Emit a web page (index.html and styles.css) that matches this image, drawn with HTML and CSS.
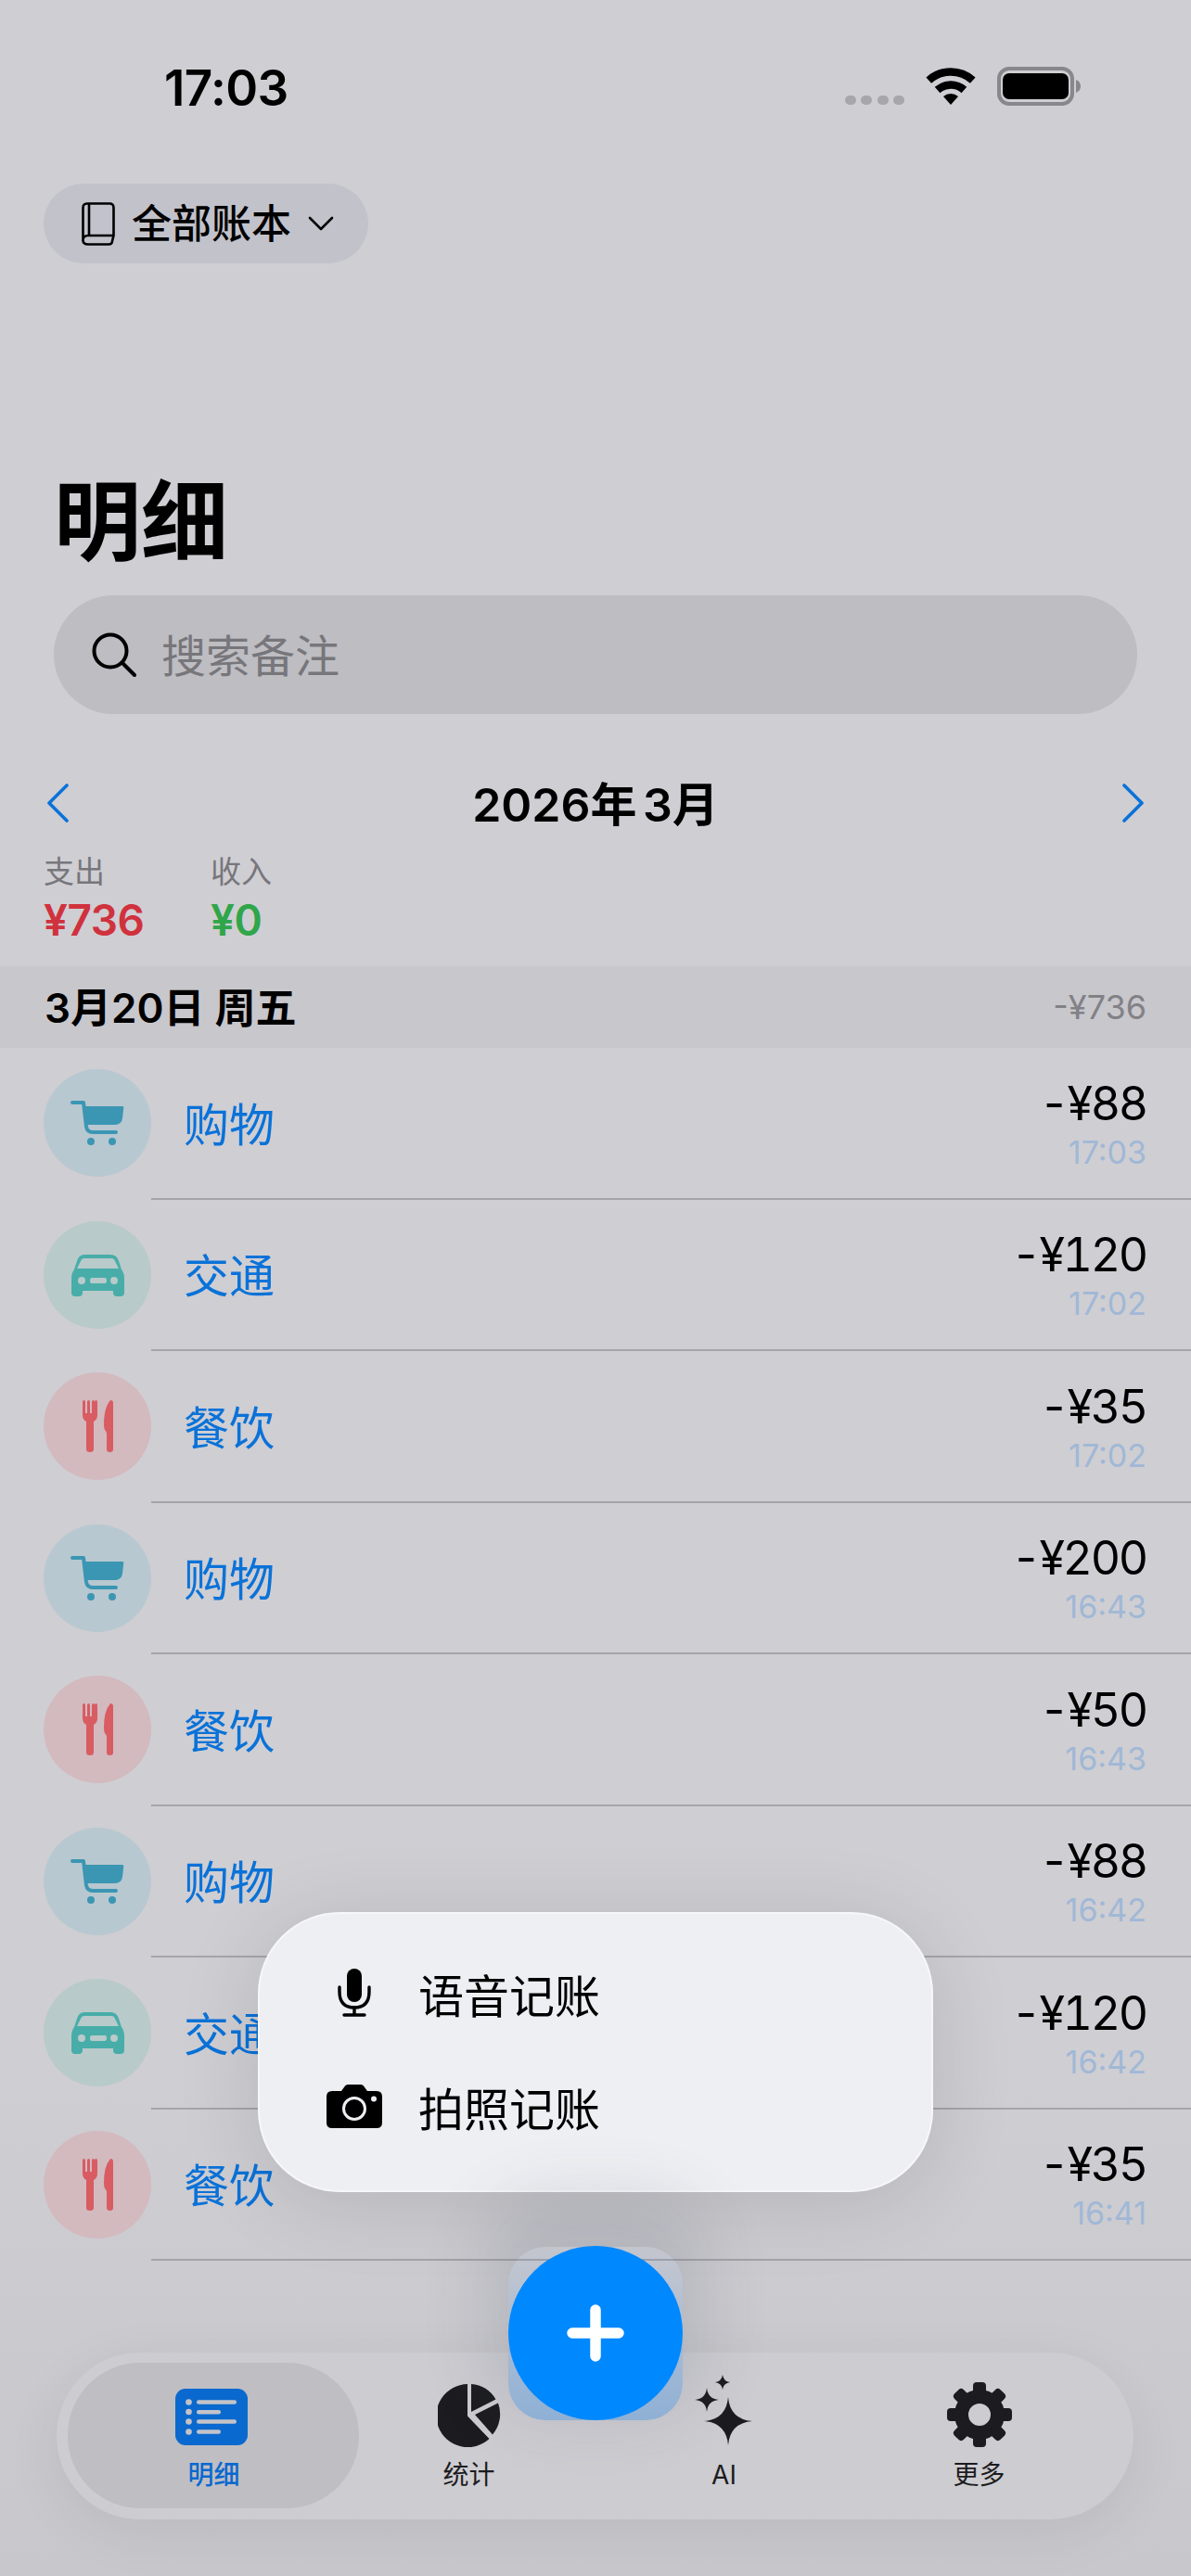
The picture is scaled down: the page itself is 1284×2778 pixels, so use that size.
FILE: index.html
```html
<!DOCTYPE html>
<html lang="zh-CN">
<head>
    <meta charset="UTF-8">
    <meta name="viewport" content="width=device-width, initial-scale=1.0">
    <title>明细</title>
    <link rel="stylesheet" href="styles.css">
</head>
<body>
    <svg class="icon-defs" width="0" height="0">
        <defs>
            <symbol id="cart" viewBox="0 0 116 116">
                <path d="M31 36H43L46 62Q47 68 53 68H78" fill="none" stroke="currentColor" stroke-width="4" stroke-linecap="round" stroke-linejoin="round"/>
                <path d="M43 40H85Q86.500 40 86.300 41.500L85 53Q84 60 77 60H46Z" fill="currentColor"/>
                <circle cx="51" cy="78" r="4" fill="currentColor"/>
                <circle cx="74" cy="78" r="4" fill="currentColor"/>
            </symbol>
            <symbol id="car" viewBox="0 0 116 116">
                <path fill-rule="evenodd" fill="currentColor" d="M44 36H72Q79 36 81 43L84 52Q87 56 87 62V77Q87 81 83 81H79Q75 81 75 77V75H42V77Q42 81 38 81H34Q30 81 30 77V62Q30 56 33 52L36 43Q38 36 44 36ZM44 40Q41 40 40 43L36 51H81L77 43Q76 40 73 40ZM41 60A4 4 0 1 0 41 68A4 4 0 1 0 41 60ZM76 60A4 4 0 1 0 76 68A4 4 0 1 0 76 60ZM52 61Q50 61 50 64Q50 67 52 67H66Q68 67 68 64Q68 61 66 61Z"/>
            </symbol>
            <symbol id="food" viewBox="0 0 116 116">
                <path fill="currentColor" d="M42 32Q42 30 43.500 30Q45 30 45 32V44H47V32Q47 30 48.500 30Q50 30 50 32V44H52V32Q52 30 53.500 30Q55 30 55 32V32H55Q55 30 56.500 30Q58 30 58 32V46Q58 51 54 53V83Q54 86 50 86Q46 86 46 83V53Q42 51 42 46Z"/>
                <path fill="currentColor" d="M72 30Q75 30 75 33V83Q75 86 71.500 86Q68 86 68 83V66Q68 64 66 62Q65 60 65 56Q65 38 72 30Z"/>
            </symbol>
        </defs>
    </svg>

    <div class="screen">
        <div class="status-bar">
            <span class="clock">17:03</span>
            <div class="status-icons">
                <svg class="signal" width="64" height="10" viewBox="0 0 64 10">
                    <rect x="0" width="12" height="10" rx="5"/>
                    <rect x="17" width="12" height="10" rx="5"/>
                    <rect x="35" width="12" height="10" rx="5"/>
                    <rect x="52" width="12" height="10" rx="5"/>
                </svg>
                <svg class="wifi" width="56" height="40" viewBox="0 0 56 40">
                    <path d="M28 40L20 31.100A12 12 0 0 1 36 31.100Z" fill="#000"/>
                    <path d="M13.600 24A21.500 21.500 0 0 1 42.400 24" fill="none" stroke="#000" stroke-width="8.500"/>
                    <path d="M4.250 13.600A35.500 35.500 0 0 1 51.750 13.600" fill="none" stroke="#000" stroke-width="8.500"/>
                </svg>
                <svg class="battery" width="90" height="42" viewBox="0 0 90 42">
                    <rect x="2" y="2" width="79" height="38" rx="11" fill="none" stroke="#88878b" stroke-width="4"/>
                    <rect x="6" y="7" width="71" height="28" rx="7" fill="#000"/>
                    <path d="M85 14Q90 16 90 21Q90 26 85 28Z" fill="#88878b"/>
                </svg>
            </div>
        </div>

        <div class="book-pill">
            <svg width="36" height="47" viewBox="0 0 36 47" fill="none" stroke="#000" stroke-width="2.600" stroke-linejoin="round">
                <path d="M6 1.500H30Q34.500 1.500 34.500 6V36H7Q1.500 36 1.500 41V6Q1.500 1.500 6 1.500Z"/>
                <path d="M8 1.500V36M1.500 41Q1.500 45.500 7 45.500H29Q33 45.500 33 42L34.500 36"/>
            </svg>
            <span class="book-name">全部账本</span>
            <svg width="28" height="16" viewBox="0 0 28 16" fill="none" stroke="#000" stroke-width="2.600" stroke-linecap="round" stroke-linejoin="round">
                <path d="M2 2L14 14L26 2"/>
            </svg>
        </div>

        <h1 class="page-title">明细</h1>

        <div class="search-box">
            <svg width="48" height="48" viewBox="0 0 48 48" fill="none" stroke="#000" stroke-width="4" stroke-linecap="round">
                <circle cx="20" cy="20" r="17.500"/>
                <path d="M33 33L46 46"/>
            </svg>
            <span class="search-hint">搜索备注</span>
        </div>

        <div class="month-nav">
            <svg width="24" height="42" viewBox="0 0 24 42" fill="none" stroke="#0a72d8" stroke-width="3.600" stroke-linecap="round" stroke-linejoin="round">
                <path d="M22 2L3 21L22 40"/>
            </svg>
            <span class="month-label">2026年 3月</span>
            <svg width="24" height="42" viewBox="0 0 24 42" fill="none" stroke="#0a72d8" stroke-width="3.600" stroke-linecap="round" stroke-linejoin="round">
                <path d="M2 2L21 21L2 40"/>
            </svg>
        </div>

        <div class="month-stats">
            <div class="stat">
                <div class="stat-label">支出</div>
                <div class="stat-value expense">¥736</div>
            </div>
            <div class="stat">
                <div class="stat-label">收入</div>
                <div class="stat-value income">¥0</div>
            </div>
        </div>

        <div class="day-header">
            <span class="day-title">3月20日 周五</span>
            <span class="day-total">-¥736</span>
        </div>

        <div class="rows">
            <div class="row">
                <div class="cat-circle shop"><svg width="116" height="116"><use href="#cart"/></svg></div>
                <div class="row-body">
                    <span class="cat-name">购物</span>
                    <div class="row-right"><div class="amount">-¥88</div><div class="time">17:03</div></div>
                </div>
            </div>
            <div class="row">
                <div class="cat-circle traffic"><svg width="116" height="116"><use href="#car"/></svg></div>
                <div class="row-body">
                    <span class="cat-name">交通</span>
                    <div class="row-right"><div class="amount">-¥120</div><div class="time">17:02</div></div>
                </div>
            </div>
            <div class="row">
                <div class="cat-circle food"><svg width="116" height="116"><use href="#food"/></svg></div>
                <div class="row-body">
                    <span class="cat-name">餐饮</span>
                    <div class="row-right"><div class="amount">-¥35</div><div class="time">17:02</div></div>
                </div>
            </div>
            <div class="row">
                <div class="cat-circle shop"><svg width="116" height="116"><use href="#cart"/></svg></div>
                <div class="row-body">
                    <span class="cat-name">购物</span>
                    <div class="row-right"><div class="amount">-¥200</div><div class="time">16:43</div></div>
                </div>
            </div>
            <div class="row">
                <div class="cat-circle food"><svg width="116" height="116"><use href="#food"/></svg></div>
                <div class="row-body">
                    <span class="cat-name">餐饮</span>
                    <div class="row-right"><div class="amount">-¥50</div><div class="time">16:43</div></div>
                </div>
            </div>
            <div class="row">
                <div class="cat-circle shop"><svg width="116" height="116"><use href="#cart"/></svg></div>
                <div class="row-body">
                    <span class="cat-name">购物</span>
                    <div class="row-right"><div class="amount">-¥88</div><div class="time">16:42</div></div>
                </div>
            </div>
            <div class="row">
                <div class="cat-circle traffic"><svg width="116" height="116"><use href="#car"/></svg></div>
                <div class="row-body">
                    <span class="cat-name">交通</span>
                    <div class="row-right"><div class="amount">-¥120</div><div class="time">16:42</div></div>
                </div>
            </div>
            <div class="row">
                <div class="cat-circle food"><svg width="116" height="116"><use href="#food"/></svg></div>
                <div class="row-body">
                    <span class="cat-name">餐饮</span>
                    <div class="row-right"><div class="amount">-¥35</div><div class="time">16:41</div></div>
                </div>
            </div>
        </div>

        <div class="add-menu">
            <div class="menu-item">
                <div class="menu-icon">
                    <svg width="36" height="52" viewBox="0 0 36 52" fill="none" stroke="#000" stroke-width="3.400" stroke-linecap="round">
                        <rect x="10" y="0" width="16" height="36" rx="8" fill="#000" stroke="none"/>
                        <path d="M2 20V25Q2 42 18 42Q34 42 34 25V20"/>
                        <path d="M18 42V50M7 50H29"/>
                    </svg>
                </div>
                <span>语音记账</span>
            </div>
            <div class="menu-item">
                <div class="menu-icon">
                    <svg width="60" height="47" viewBox="0 0 60 47">
                        <path fill="#000" d="M6 7H16L20 1.500Q21 0 23 0H37Q39 0 40 1.500L44 7H54Q60 7 60 13V41Q60 47 54 47H6Q0 47 0 41V13Q0 7 6 7Z"/>
                        <circle cx="30" cy="26" r="11.500" fill="none" stroke="#eeeff3" stroke-width="3"/>
                        <circle cx="51" cy="15.500" r="3" fill="#eeeff3"/>
                    </svg>
                </div>
                <span>拍照记账</span>
            </div>
        </div>

        <div class="tab-bar">
            <div class="tab active">
                <svg class="list-icon" width="78" height="61" viewBox="0 0 78 61">
                    <rect width="78" height="61" rx="11" fill="#0a69cf"/>
                    <g fill="#c4c3c8">
                        <circle cx="14.500" cy="14.500" r="3.300"/>
                        <circle cx="14.500" cy="25" r="3.300"/>
                        <circle cx="14.500" cy="35.500" r="3.300"/>
                        <circle cx="14.500" cy="46.500" r="3.300"/>
                        <rect x="23" y="12.300" width="43" height="4.400" rx="2.200"/>
                        <rect x="23" y="23" width="26" height="4.400" rx="2.200"/>
                        <rect x="23" y="33.300" width="43" height="4.400" rx="2.200"/>
                        <rect x="23" y="44.300" width="26" height="4.400" rx="2.200"/>
                    </g>
                </svg>
                <span class="tab-label">明细</span>
            </div>
            <div class="tab">
                <svg width="68" height="68" viewBox="0 0 68 68" fill="#1c1c20">
                    <path d="M32 0.100V34.500L55.500 59A34 34 0 1 1 32 0.100Z"/>
                    <path d="M36 0.100A34 34 0 0 1 62.500 16.500L36 30Z"/>
                    <path d="M65 20.500A34 34 0 0 1 59 54.500L40 33Z"/>
                </svg>
                <span class="tab-label">统计</span>
            </div>
            <div class="tab">
                <svg class="sparkle" width="64" height="78" viewBox="0 0 64 78" fill="#1c1c20">
                    <path d="M36 24Q38 48 62 50Q38 52 36 76Q34 52 10 50Q34 48 36 24Z"/>
                    <path d="M13 14Q14 26 26 27Q14 28 13 40Q12 28 0 27Q12 26 13 14Z"/>
                    <path d="M30 0Q31 7 38 8Q31 9 30 16Q29 9 22 8Q29 7 30 0Z"/>
                </svg>
                <span class="tab-label">AI</span>
            </div>
            <div class="tab">
                <svg width="70" height="70" viewBox="-35 -35 70 70" fill="#1c1c20">
                    <circle r="19.500" fill="none" stroke="#1c1c20" stroke-width="15"/>
                    <rect x="-7" y="-35" width="14" height="16" rx="4"/>
                    <rect x="-7" y="-35" width="14" height="16" rx="4" transform="rotate(45)"/>
                    <rect x="-7" y="-35" width="14" height="16" rx="4" transform="rotate(90)"/>
                    <rect x="-7" y="-35" width="14" height="16" rx="4" transform="rotate(135)"/>
                    <rect x="-7" y="-35" width="14" height="16" rx="4" transform="rotate(180)"/>
                    <rect x="-7" y="-35" width="14" height="16" rx="4" transform="rotate(225)"/>
                    <rect x="-7" y="-35" width="14" height="16" rx="4" transform="rotate(270)"/>
                    <rect x="-7" y="-35" width="14" height="16" rx="4" transform="rotate(315)"/>
                </svg>
                <span class="tab-label">更多</span>
            </div>
        </div>

        <div class="fab-glow"></div>
        <div class="fab">
            <svg width="62" height="62" viewBox="0 0 62 62" stroke="#fff" stroke-width="11.500" stroke-linecap="round">
                <path d="M6 31H56M31 6V56"/>
            </svg>
        </div>
    </div>
</body>
</html>
```
FILE: styles.css
```css
* {
    box-sizing: border-box;
}

body {
    margin: 0;
    font-family: Inter, "Noto Sans CJK SC", sans-serif;
    background-color: #cfced3;
    color: #000;
}

.icon-defs {
    position: absolute;
}

.screen {
    position: relative;
    width: 1284px;
    height: 2778px;
    overflow: hidden;
    background: linear-gradient(180deg, #cfced3 0%, #cfced3 80%, #cbcacf 90%, #c8c7cb 100%);
}

.status-bar {
    display: flex;
    justify-content: space-between;
    height: 198px;
    padding: 72px 119px 0 177px;
}
.clock {
    font-size: 53px;
    font-weight: 600;
    line-height: 46px;
    letter-spacing: -0.600px;
}
.status-icons {
    display: flex;
    align-items: flex-end;
    height: 42px;
}
.signal {
    fill: #a7a6aa;
    margin-bottom: 1px;
    margin-right: 22px;
}
.wifi {
    margin-right: 22px;
    margin-bottom: 1px;
}

.book-pill {
    display: flex;
    align-items: center;
    width: 350px;
    height: 86px;
    margin-left: 47px;
    padding-left: 41px;
    border-radius: 43px;
    background-color: #c2c2cb;
}
.book-name {
    margin: -6px 18px 0;
    font-size: 43px;
    font-weight: 500;
    white-space: nowrap;
}

.page-title {
    margin: 229px 0 0 58px;
    height: 82px;
    font-size: 94px;
    line-height: 100px;
    font-weight: 700;
}

.search-box {
    display: flex;
    align-items: center;
    height: 128px;
    margin: 47px 58px 0;
    padding-left: 41px;
    border-radius: 64px;
    background-color: #bebdc2;
}
.search-hint {
    margin: -4px 0 0 27px;
    font-size: 48px;
    color: #77767b;
}

.month-nav {
    display: flex;
    justify-content: space-between;
    align-items: center;
    height: 60px;
    margin-top: 66px;
    padding: 0 50px;
}
.month-label {
    margin-top: -4px;
    font-size: 50px;
    font-weight: 600;
    word-spacing: -6px;
}

.month-stats {
    display: flex;
    gap: 70px;
    margin-top: 22px;
    padding-left: 47px;
    height: 124px;
}
.stat {
    min-width: 110px;
}
.stat-label {
    font-size: 33px;
    line-height: 44px;
    color: #77767b;
}
.stat-value {
    margin-top: 2px;
    font-size: 46px;
    line-height: 56px;
    font-weight: 600;
    letter-spacing: -0.500px;
}
.expense {
    color: #d0323d;
}
.income {
    color: #30a64a;
}

.day-header {
    display: flex;
    justify-content: space-between;
    align-items: center;
    height: 88px;
    padding: 0 48px;
    background-color: #c8c7cc;
}
.day-title {
    margin-top: -4px;
    font-size: 44px;
    font-weight: 600;
}
.day-total {
    font-size: 36px;
    color: #828186;
}

.row {
    display: flex;
    height: 163.500px;
    padding-left: 47px;
}
.cat-circle {
    flex: none;
    width: 116px;
    height: 116px;
    margin-top: 23px;
    border-radius: 50%;
}
.shop {
    background-color: #b8c8d0;
    color: #3b96b3;
}
.traffic {
    background-color: #b8caca;
    color: #48ada8;
}
.food {
    background-color: #d2babf;
    color: #d85c62;
}
.row-body {
    flex: 1;
    display: flex;
    justify-content: space-between;
    align-items: center;
    padding: 0 48px 0 35px;
    border-bottom: 2px solid #a5a4a9;
}
.cat-name {
    font-size: 49px;
    color: #0a72d8;
    margin-top: -3px;
}
.row-right {
    padding-top: 2px;
    text-align: right;
}
.amount {
    font-size: 50px;
    line-height: 62px;
    font-variant-numeric: tabular-nums;
    letter-spacing: -2.300px;
}
.time {
    font-size: 34px;
    line-height: 44px;
    color: #a0b8d6;
}

.add-menu {
    position: absolute;
    top: 2062px;
    left: 278px;
    width: 728px;
    height: 302px;
    padding-top: 24px;
    border: 2px solid #f7f7f9;
    border-radius: 88px;
    background-color: #eeeff3;
    box-shadow: 0 10px 90px rgba(0, 0, 0, 0.12);
}
.menu-item {
    display: flex;
    align-items: center;
    height: 122px;
    font-size: 49px;
}
.menu-icon {
    display: flex;
    justify-content: center;
    width: 60px;
    margin: 0 39px 0 72px;
}

.tab-bar {
    position: absolute;
    top: 2537px;
    left: 61px;
    display: grid;
    grid-template-columns: repeat(4, 275px);
    width: 1161px;
    height: 180px;
    padding: 0 30px 0 32px;
    border-radius: 90px;
    background-color: #cdccd1;
    box-shadow: 0 14px 60px rgba(0, 0, 0, 0.07);
}
.tab {
    position: relative;
    display: flex;
    flex-direction: column;
    align-items: center;
    justify-content: flex-end;
    padding-bottom: 31px;
}
.tab svg {
    position: relative;
    margin-bottom: 13px;
}
.tab .list-icon {
    margin: 0 5px 15px 0;
}
.tab.active::before {
    content: "";
    position: absolute;
    top: 11px;
    left: -20px;
    right: -19px;
    height: 157px;
    border-radius: 78px;
    background-color: #bfbec3;
}
.tab-label {
    position: relative;
    font-size: 28px;
    line-height: 34px;
    color: #1c1c20;
}
.tab.active .tab-label {
    font-weight: 500;
    color: #0a69cf;
}

.fab-glow {
    position: absolute;
    top: 2423px;
    left: 548px;
    width: 188px;
    height: 187px;
    border-radius: 40px;
    background: linear-gradient(180deg, rgba(40, 130, 220, 0.03), rgba(40, 130, 220, 0.38));
    box-shadow: 0 -30px 70px 24px rgba(60, 70, 90, 0.14);
}
.fab {
    position: absolute;
    top: 2422px;
    left: 548px;
    display: flex;
    align-items: center;
    justify-content: center;
    width: 188px;
    height: 188px;
    border-radius: 50%;
    background-color: #0088ff;
}
```
